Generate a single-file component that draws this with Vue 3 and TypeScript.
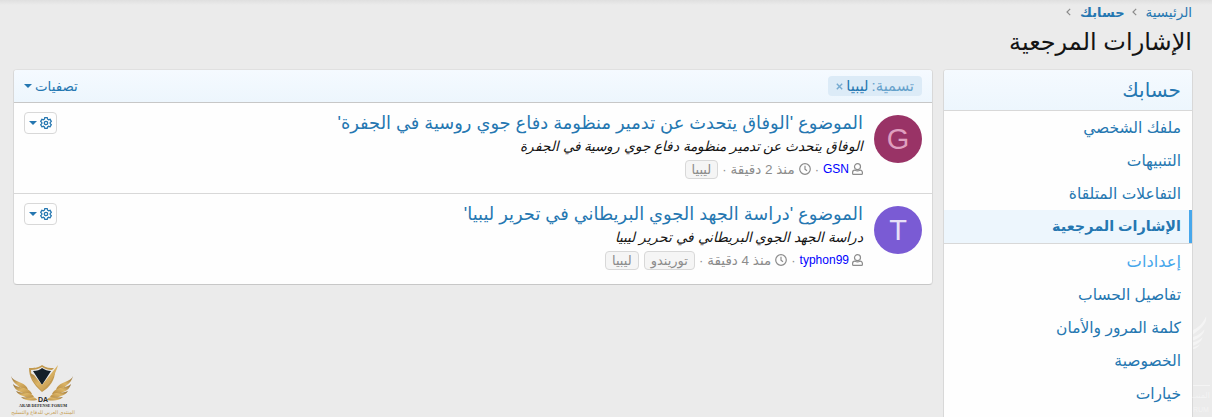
<script setup lang="ts">
import { ref } from 'vue';

interface Bookmark {
  id: number
  letter: string
  color: string
  background: string
  title: string
  snippet: string
  user: string
  date: string
  labels: string[]
}

const accountLinks = ['ملفك الشخصي', 'التنبيهات', 'التفاعلات المتلقاة', 'الإشارات المرجعية'];
const settingsLinks = ['تفاصيل الحساب', 'كلمة المرور والأمان', 'الخصوصية', 'خيارات'];
const selected = ref('الإشارات المرجعية');

const bookmarks = ref<Bookmark[]>([
  {
    id: 1,
    letter: 'G',
    color: '#df9fbf',
    background: '#993366',
    title: "الموضوع 'الوفاق يتحدث عن تدمير منظومة دفاع جوي روسية في الجفرة'",
    snippet: 'الوفاق يتحدث عن تدمير منظومة دفاع جوي روسية في الجفرة',
    user: 'GSN',
    date: 'منذ 2 دقيقة',
    labels: ['ليبيا'],
  },
  {
    id: 2,
    letter: 'T',
    color: '#e8e1f7',
    background: '#7a5bd4',
    title: "الموضوع 'دراسة الجهد الجوي البريطاني في تحرير ليبيا'",
    snippet: 'دراسة الجهد الجوي البريطاني في تحرير ليبيا',
    user: 'typhon99',
    date: 'منذ 4 دقيقة',
    labels: ['توريندو', 'ليبيا'],
  },
]);
</script>

<template>
  <div class="page" dir="rtl">
    <nav class="breadcrumbs">
      <a>الرئيسية</a>
      <svg class="chevron" viewBox="0 0 5 8"><path d="M4.2 .8 1 4l3.2 3.2" /></svg>
      <a class="current">حسابك</a>
      <svg class="chevron" viewBox="0 0 5 8"><path d="M4.2 .8 1 4l3.2 3.2" /></svg>
    </nav>
    <h1>الإشارات المرجعية</h1>

    <div class="columns">
      <aside class="side">
        <h2>حسابك</h2>
        <a v-for="link in accountLinks" :key="link" class="link" :class="{ selected: link === selected }" @click="selected = link">{{ link }}</a>
        <h3>إعدادات</h3>
        <a v-for="link in settingsLinks" :key="link" class="link" :class="{ selected: link === selected }" @click="selected = link">{{ link }}</a>
      </aside>

      <main class="block">
        <div class="filter-bar">
          <a class="filter"><span class="filter-name">تسمية:</span> <span>ليبيا</span><svg viewBox="0 0 7 7"><path d="m.8 .8 5.4 5.4m0-5.4L.8 6.2" /></svg></a>
          <a class="filters">تصفيات<i class="caret"></i></a>
        </div>
        <article v-for="item in bookmarks" :key="item.id" class="row">
          <div class="avatar" :style="{ background: item.background, color: item.color }">{{ item.letter }}</div>
          <div class="content">
            <a class="title">{{ item.title }}</a>
            <div class="snippet">{{ item.snippet }}</div>
            <div class="meta">
              <svg class="user-icon" viewBox="0 0 11 12">
                <circle cx="5.5" cy="3.7" r="3" />
                <path d="M3.2 7.2h-.4C1.5 7.2.6 8.2.6 9.4v1.1c0 .5.4.9.9.9h8c.5 0 .9-.4.9-.9V9.4c0-1.2-.9-2.2-2.2-2.2h-.4c-1.4.8-3.2.8-4.6 0z" />
              </svg>
              <a class="user">{{ item.user }}</a>
              <span class="dot">·</span>
              <svg class="clock-icon" viewBox="0 0 12 12"><circle cx="6" cy="6" r="5.3" /><path d="M6 2.8v3.4l2 1.5" /></svg>
              <span class="date">{{ item.date }}</span>
              <span class="dot">·</span>
              <span v-for="label in item.labels" :key="label" class="label">{{ label }}</span>
            </div>
          </div>
          <button class="tools" type="button">
            <svg viewBox="0 0 12 12">
              <path d="M4.8.7h2.4l.4 1.5 1 .6 1.5-.5 1.2 2.1-1.1 1.1v1.1l1.1 1.1-1.2 2.1-1.5-.5-1 .6-.4 1.4H4.8l-.4-1.4-1-.6-1.5.5L.7 7.7l1.1-1.1V5.5L.7 4.4l1.2-2.1 1.5.5 1-.6z" />
              <circle cx="6" cy="6" r="1.7" />
            </svg>
            <i class="caret"></i>
          </button>
        </article>
      </main>
    </div>

    <div class="logo" dir="ltr">
      <svg viewBox="0 0 64 37">
        <defs>
          <linearGradient id="gold" x1="0" y1="0" x2="1" y2="1">
            <stop offset="0" stop-color="#8c6730" />
            <stop offset=".5" stop-color="#dcb566" />
            <stop offset="1" stop-color="#b58a42" />
          </linearGradient>
        </defs>
        <g id="wing" fill="url(#gold)">
          <path d="M0 11c1 3 4 4 8 6 5 2 8 4 9 8-4-1-8-2-11-5-3-2-5-5-6-9z" />
          <path d="M2 19c3 3 7 3 11 4 4 1 7 3 8 6-4 0-7 0-11-2-4-1-7-4-8-8z" />
          <path d="M5 26c4 2 7 1 11 2 4 0 6 2 7 4-4 1-7 1-11-1-3-1-5-2-7-5z" />
          <path d="M10 32c4 1 8 0 11 0 3 0 5 2 5 3-6 1-12 1-16-3z" />
        </g>
        <use href="#wing" transform="matrix(-1 0 0 1 62 0)" />
        <path fill="#c39a4f" d="M18 3c5 0 9 0 13-3 4 3 8 3 12 3l-2 2c-4 0-7-1-10-3-3 2-7 3-11 3 0 8 4 14 11 19 6-4 10-9 11-15l2-3c0 9-5 16-13 21C22 19 18 12 18 3z" />
        <path fill="#142029" d="M22 6c4 0 7-1 9-3 3 2 6 3 9 3l-9 14z" />
        <path fill="url(#gold)" d="m19 8 4 2 8 10L47 0c-2 8-8 19-16 26-5-5-10-11-12-18z" />
      </svg>
      <span class="logo-mark">DA</span>
      <span class="logo-name">ARAB DEFENSE FORUM</span>
      <span class="logo-arabic" dir="rtl">المنتدى العربي للدفاع والتسليح</span>
    </div>

    <div class="watermark" dir="ltr">
      <svg viewBox="0 0 16 40">
        <path d="M15 0c1 7-3 13-15 21v-5C8 12 12 7 15 0zM13 15c0 5-5 10-13 13v-4c6-2 10-5 13-9zM11 24c-1 5-5 8-11 10v-4c5-1 8-3 11-6zM8 32c-1 3-4 5-8 6v-2c3-1 6-2 8-4z" />
      </svg>
      <span class="watermark-arabic" dir="rtl">المنت</span>
      <span class="watermark-name">RUM</span>
    </div>
  </div>
</template>

<style>
body {
  margin: 0;
  overflow: hidden;
  background: #ebebeb;
}
</style>

<style scoped>
.page {
  position: relative;
  box-sizing: border-box;
  height: 417px;
  padding: 3px 19px 0 13px;
  overflow: hidden;
  background: linear-gradient(#dfdfdf, #ebebeb 5px);
  color: #141414;
  font: 13px "Liberation Sans", "DejaVu Sans", sans-serif;
}

a {
  color: #2577b1;
  cursor: pointer;
}

.breadcrumbs {
  display: flex;
  align-items: center;
  height: 18px;
  padding-right: 1px;
  font-size: 13.5px;
}

.breadcrumbs .current {
  font-size: 13px;
  font-weight: bold;
}

.chevron {
  width: 5px;
  height: 8px;
  margin: 0 9px 0 7px;
  fill: none;
  stroke: #8c8c8c;
  stroke-width: 1.2;
}

h1 {
  height: 48px;
  margin: 0;
  padding-right: 1px;
  font-size: 24px;
  font-weight: normal;
  line-height: 42px;
}

.columns {
  display: flex;
  align-items: flex-start;
  gap: 10px;
}

.side,
.block {
  box-sizing: border-box;
  border: 1px solid #d8d8d8;
  border-top-color: #e0e0e0;
  border-bottom-color: #c7c7c7;
  border-radius: 4px;
  background: #fefefe;
  overflow: hidden;
}

.side {
  flex: none;
  width: 250px;
  padding-bottom: 20px;
}

.side h2 {
  height: 40px;
  margin: 0;
  padding: 0 11px;
  border-bottom: 1px solid #d8d8d8;
  background: linear-gradient(#f5faff, #edf6fd);
  color: #2577b1;
  font-size: 20px;
  font-weight: normal;
  line-height: 40px;
}

.link {
  display: block;
  height: 33px;
  padding: 0 11px;
  font-size: 15.5px;
  line-height: 33px;
}

.link.selected {
  padding-right: 8px;
  border-right: 3px solid #47a7eb;
  background: #edf6fd;
  font-size: 14.4px;
  font-weight: bold;
  line-height: 32px;
}

.side h3 {
  height: 34px;
  margin: 0;
  padding: 0 11px;
  border-top: 1px solid #d8d8d8;
  color: #47a7eb;
  font-size: 16.3px;
  font-weight: normal;
  line-height: 34px;
}

.block {
  flex: 1;
}

.filter-bar {
  display: flex;
  align-items: center;
  justify-content: space-between;
  height: 32px;
  padding: 0 10px;
  border-bottom: 1px solid #c7c7c7;
  background: linear-gradient(#f5faff, #edf6fd);
}

.filter {
  display: flex;
  align-items: center;
  gap: 3px;
  box-sizing: border-box;
  width: 94px;
  height: 20px;
  padding: 0 8px;
  border-radius: 4px;
  background: #dcebf7;
  font-size: 14.8px;
  line-height: 20px;
  white-space: nowrap;
}

.filter-name {
  color: #65a1cb;
}

.filter svg {
  flex: none;
  width: 7px;
  height: 7px;
  fill: none;
  stroke: #75aad0;
  stroke-width: 1.4;
}

.filters {
  display: flex;
  align-items: center;
  gap: 3px;
  font-size: 13.4px;
}

.caret {
  border: 4px solid transparent;
  border-top-color: #2577b1;
  border-bottom: 0;
}

.row {
  display: flex;
  align-items: flex-start;
  box-sizing: border-box;
  height: 90px;
  padding: 12px 10px 0;
}

.row + .row {
  height: 91px;
  border-top: 1px solid #d8d8d8;
}

.avatar {
  flex: none;
  width: 48px;
  height: 48px;
  border-radius: 50%;
  font-size: 29px;
  line-height: 48px;
  text-align: center;
}

.content {
  flex: 1;
  min-width: 0;
  padding-right: 11px;
  white-space: nowrap;
}

.title {
  display: block;
  height: 23px;
  margin-top: -3px;
  font-size: 17.85px;
  line-height: 23px;
}

.snippet {
  height: 24px;
  font-size: 13.7px;
  font-style: italic;
  line-height: 24px;
}

.meta {
  display: flex;
  align-items: center;
  height: 20px;
  color: #8c8c8c;
  font-size: 13px;
}

.meta svg {
  width: 12px;
  height: 12px;
  margin-left: 4px;
  fill: none;
  stroke: #8c8c8c;
  stroke-width: 1.2;
}

.meta .user-icon {
  width: 11px;
  margin-left: 3px;
}

.user {
  color: #0000ff;
  font-size: 12px;
}

.date {
  font-size: 13.5px;
}

.dot {
  margin: 0 4px;
}

.label {
  height: 17px;
  margin-left: 5px;
  padding: 0 6px;
  border: 1px solid #d8d8d8;
  border-radius: 4px;
  background: #f5f5f5;
  line-height: 17px;
}

.tools {
  display: flex;
  align-items: center;
  justify-content: center;
  gap: 3px;
  box-sizing: border-box;
  width: 33px;
  height: 22px;
  margin: -3px 0 0;
  padding: 0 1px 0 0;
  border: 1px solid #d8d8d8;
  border-radius: 4px;
  background: #fefefe;
}

.tools svg {
  width: 12px;
  height: 12px;
  fill: none;
  stroke: #2577b1;
  stroke-width: 1.3;
}

.logo {
  position: absolute;
  top: 365px;
  left: 11px;
  display: flex;
  flex-direction: column;
  align-items: center;
  width: 64px;
  color: #292a29;
  white-space: nowrap;
}

.logo svg {
  width: 64px;
  height: 37px;
}

.logo-mark {
  margin-top: -6px;
  font: bold 7px/7px "Liberation Sans", sans-serif;
}

.logo-name {
  font: bold 4.1px/5px "Liberation Serif", serif;
}

.logo-arabic {
  color: #c69d51;
  font-size: 5px;
  line-height: 8px;
}

/* faint forum mark beside the sidebar */
.watermark {
  position: absolute;
  top: 313px;
  right: 2px;
  display: flex;
  flex-direction: column;
  align-items: flex-start;
  width: 17px;
  color: rgba(255, 255, 255, .45);
  pointer-events: none;
}

.watermark svg {
  width: 14px;
  height: 41px;
  fill: currentColor;
}

.watermark-arabic {
  width: 17px;
  margin-top: 31px;
  border-top: 1px solid currentColor;
  font-size: 8px;
  line-height: 20px;
}

.watermark-name {
  font-size: 7px;
  line-height: 8px;
}
</style>
